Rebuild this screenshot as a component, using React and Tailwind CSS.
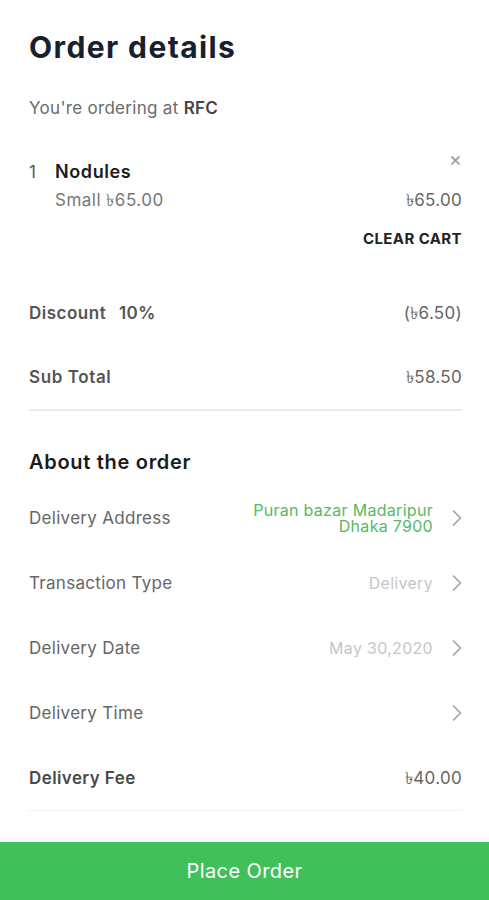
import React from "react";

const Chevron = () => (
  <svg width="10" height="18" viewBox="0 0 10 18" className="ml-[19px] shrink-0">
    <path d="M1.5 2 L8.5 9 L1.5 16" fill="none" stroke="#a0a0a0" strokeWidth="1.6" strokeLinecap="round" strokeLinejoin="round" />
  </svg>
);

function Row({ label, bold = false, chevron = true, children }) {
  return (
    <div className="flex items-center justify-between h-[65px]">
      <span
        className={
          bold
            ? "text-[17px] leading-[24px] font-semibold text-[#4a4a4a] tracking-[0.4px]"
            : "text-[17px] leading-[24px] text-[#666] tracking-[0.3px]"
        }
      >
        {label}
      </span>
      <div className="flex items-center">
        {children}
        {chevron && <Chevron />}
      </div>
    </div>
  );
}

export default function App() {
  return (
    <div
      className="relative w-[489px] h-[900px] bg-white overflow-hidden"
      style={{ fontFamily: "Inter, 'Noto Sans', sans-serif" }}
    >
      <div className="pl-[29px] pr-[27px]">
        <h1 className="pt-[28px] text-[30px] leading-[38px] font-bold text-[#17202e] tracking-[1.4px]">
          Order details
        </h1>
        <p className="mt-[30px] text-[17px] leading-[24px] text-[#6b6b6b] tracking-[0.3px]">
          You're ordering at <span className="font-semibold text-[#444]">RFC</span>
        </p>

        <div className="mt-[40px] relative">
          <div className="flex items-center h-[24px]">
            <span className="w-[26px] text-[17px] leading-[24px] text-[#555]">1</span>
            <span className="text-[18px] leading-[24px] font-semibold text-[#1b1b1b] tracking-[0.6px]">Nodules</span>
          </div>
          <span className="absolute right-[0px] top-[-13px] text-[20px] leading-[24px] text-[#9a9a9a]">×</span>
          <div className="flex justify-between items-center mt-[4px] h-[24px] pl-[26px]">
            <span className="text-[17px] leading-[24px] text-[#777] tracking-[0.5px]">Small ৳65.00</span>
            <span className="text-[17px] leading-[24px] text-[#666] tracking-[0.3px]">৳65.00</span>
          </div>
          <div className="flex justify-end mt-[17px] h-[20px] items-center">
            <span className="text-[15px] leading-[20px] font-bold text-[#222] tracking-[0.4px]">CLEAR CART</span>
          </div>
        </div>

        <div className="mt-[32px] flex justify-between items-center h-[64px]">
          <span className="text-[17px] leading-[24px] font-semibold text-[#555] tracking-[0.5px]">
            Discount <span className="ml-[8px]">10%</span>
          </span>
          <span className="text-[17px] leading-[24px] text-[#666] tracking-[0.3px]">(৳6.50)</span>
        </div>
        <div className="flex justify-between items-center h-[64px]">
          <span className="text-[17px] leading-[24px] font-semibold text-[#555] tracking-[0.6px]">Sub Total</span>
          <span className="text-[17px] leading-[24px] text-[#666] tracking-[0.3px]">৳58.50</span>
        </div>
        <div className="h-[2px] bg-[#ebebeb]" />

        <h2 className="mt-[37px] text-[20px] leading-[28px] font-semibold text-[#1b1b1b] tracking-[0.7px]">
          About the order
        </h2>

        <div className="mt-[9px]">
          <Row label="Delivery Address">
            <div className="flex flex-col items-end text-[16px] text-[#56b967] tracking-[0.3px]">
              <span className="leading-[18px]">Puran bazar Madaripur</span>
              <span className="leading-[18px] -mt-[2px]">Dhaka 7900</span>
            </div>
          </Row>
          <Row label="Transaction Type">
            <span className="text-[16px] leading-[24px] text-[#c6c6c6] tracking-[0.3px]">Delivery</span>
          </Row>
          <Row label="Delivery Date">
            <span className="text-[16px] leading-[24px] text-[#c6c6c6] tracking-[0.3px]">May 30,2020</span>
          </Row>
          <Row label="Delivery Time" />
          <Row label="Delivery Fee" bold chevron={false}>
            <span className="text-[17px] leading-[24px] text-[#666] tracking-[0.3px]">৳40.00</span>
          </Row>
        </div>
        <div className="h-[1px] bg-[#f2f2f2]" />
      </div>

      <div className="absolute left-0 right-0 bottom-0 h-[58px] bg-[#40bf5a] flex items-center justify-center shadow-[0_-2px_6px_rgba(0,0,0,0.05)]">
        <span className="text-[20px] leading-[28px] text-white tracking-[0.4px]">Place Order</span>
      </div>
    </div>
  );
}
